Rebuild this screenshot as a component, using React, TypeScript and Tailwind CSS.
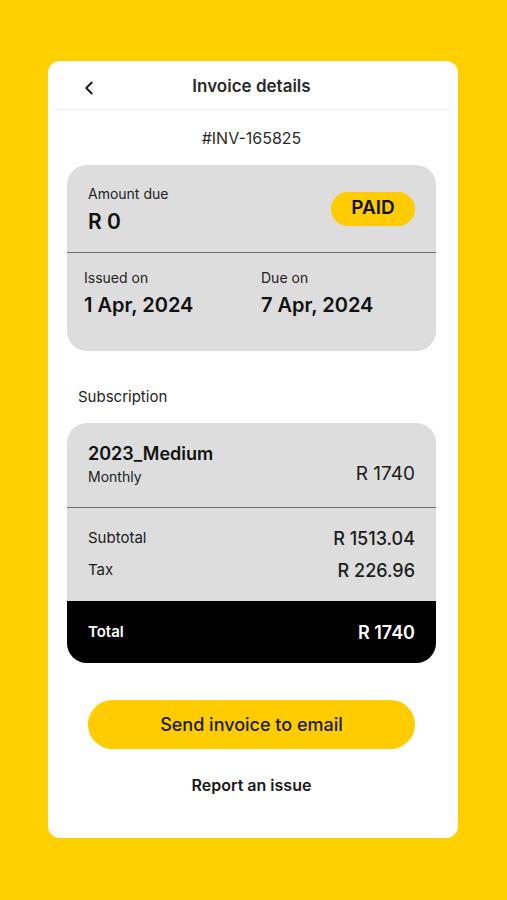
import { ChevronLeft } from "lucide-react";

const font = { fontFamily: "Inter, 'Noto Sans', sans-serif" };

function Row({ label, value }: { label: string; value: string }) {
  return (
    <div className="flex h-[32px] items-center justify-between">
      <span className="text-[15px] text-[#1c1c1c]">{label}</span>
      <span className="text-[18px] font-medium text-[#1c1c1c]">{value}</span>
    </div>
  );
}

export default function App() {
  return (
    <div className="min-h-[900px] w-[507px] bg-[#ffd000] pt-[61px]" style={font}>
      <div className="mx-[48px] h-[777px] w-[410px] rounded-[12px] bg-white">
        <div className="w-[407px]">
          <div className="relative mx-[4px] flex h-[49px] items-center justify-center border-b border-[#efefef] pt-[3px]">
            <ChevronLeft className="absolute left-[26px] top-[16px] h-[22px] w-[22px] text-[#111]" strokeWidth={2} />
            <span className="text-[17px] font-semibold text-[#2a2a2a]">Invoice details</span>
          </div>

          <div className="flex h-[55px] items-center justify-center text-[16px] text-[#2a2a2a]">#INV-165825</div>

          <div className="mx-[19px] overflow-hidden rounded-[20px] bg-[#dddddd]">
            <div className="flex h-[88px] items-center justify-between border-b border-[#6b6b6b] px-[21px]">
              <div className="flex flex-col pt-[2px]">
                <span className="text-[14px] leading-[20px] text-[#222]">Amount due</span>
                <span className="mt-[5px] text-[21px] font-semibold leading-[26px] text-[#111]">R 0</span>
              </div>
              <span className="flex h-[34px] w-[84px] items-center justify-center rounded-full bg-[#ffcc00] text-[19px] font-semibold text-[#111]">
                PAID
              </span>
            </div>
            <div className="flex h-[98px] pl-[17px] pt-[15px]">
              <div className="flex w-[177px] flex-col">
                <span className="text-[14px] leading-[20px] text-[#222]">Issued on</span>
                <span className="mt-[4px] text-[20px] font-semibold leading-[26px] text-[#111]">1 Apr, 2024</span>
              </div>
              <div className="flex flex-col">
                <span className="text-[14px] leading-[20px] text-[#222]">Due on</span>
                <span className="mt-[4px] text-[20px] font-semibold leading-[26px] text-[#111]">7 Apr, 2024</span>
              </div>
            </div>
          </div>

          <div className="mt-[36px] pl-[30px] text-[15px] leading-[20px] text-[#222]">Subscription</div>

          <div className="mx-[19px] mt-[16px] overflow-hidden rounded-[20px] bg-[#dddddd]">
            <div className="flex h-[85px] items-center justify-between border-b border-[#6b6b6b] px-[21px]">
              <div className="flex flex-col">
                <span className="text-[18px] font-semibold leading-[22px] text-[#111]">2023_Medium</span>
                <span className="mt-[2px] text-[14px] leading-[20px] text-[#222]">Monthly</span>
              </div>
              <span className="mt-[18px] text-[19px] text-[#1c1c1c]">R 1740</span>
            </div>
            <div className="flex h-[93px] flex-col px-[21px] pt-[14px]">
              <Row label="Subtotal" value="R 1513.04" />
              <Row label="Tax" value="R 226.96" />
            </div>
            <div className="flex h-[62px] items-center justify-between bg-black px-[21px] text-white">
              <span className="text-[15px] font-semibold">Total</span>
              <span className="text-[18px] font-semibold">R 1740</span>
            </div>
          </div>

          <div className="mt-[37px] flex justify-center">
            <button className="h-[49px] w-[327px] rounded-full bg-[#ffcc00] text-[18px] font-medium text-[#1a1a1a]">
              Send invoice to email
            </button>
          </div>
          <div className="mt-[24px] text-center text-[16px] font-semibold text-[#1a1a1a]">Report an issue</div>
        </div>
      </div>
    </div>
  );
}
